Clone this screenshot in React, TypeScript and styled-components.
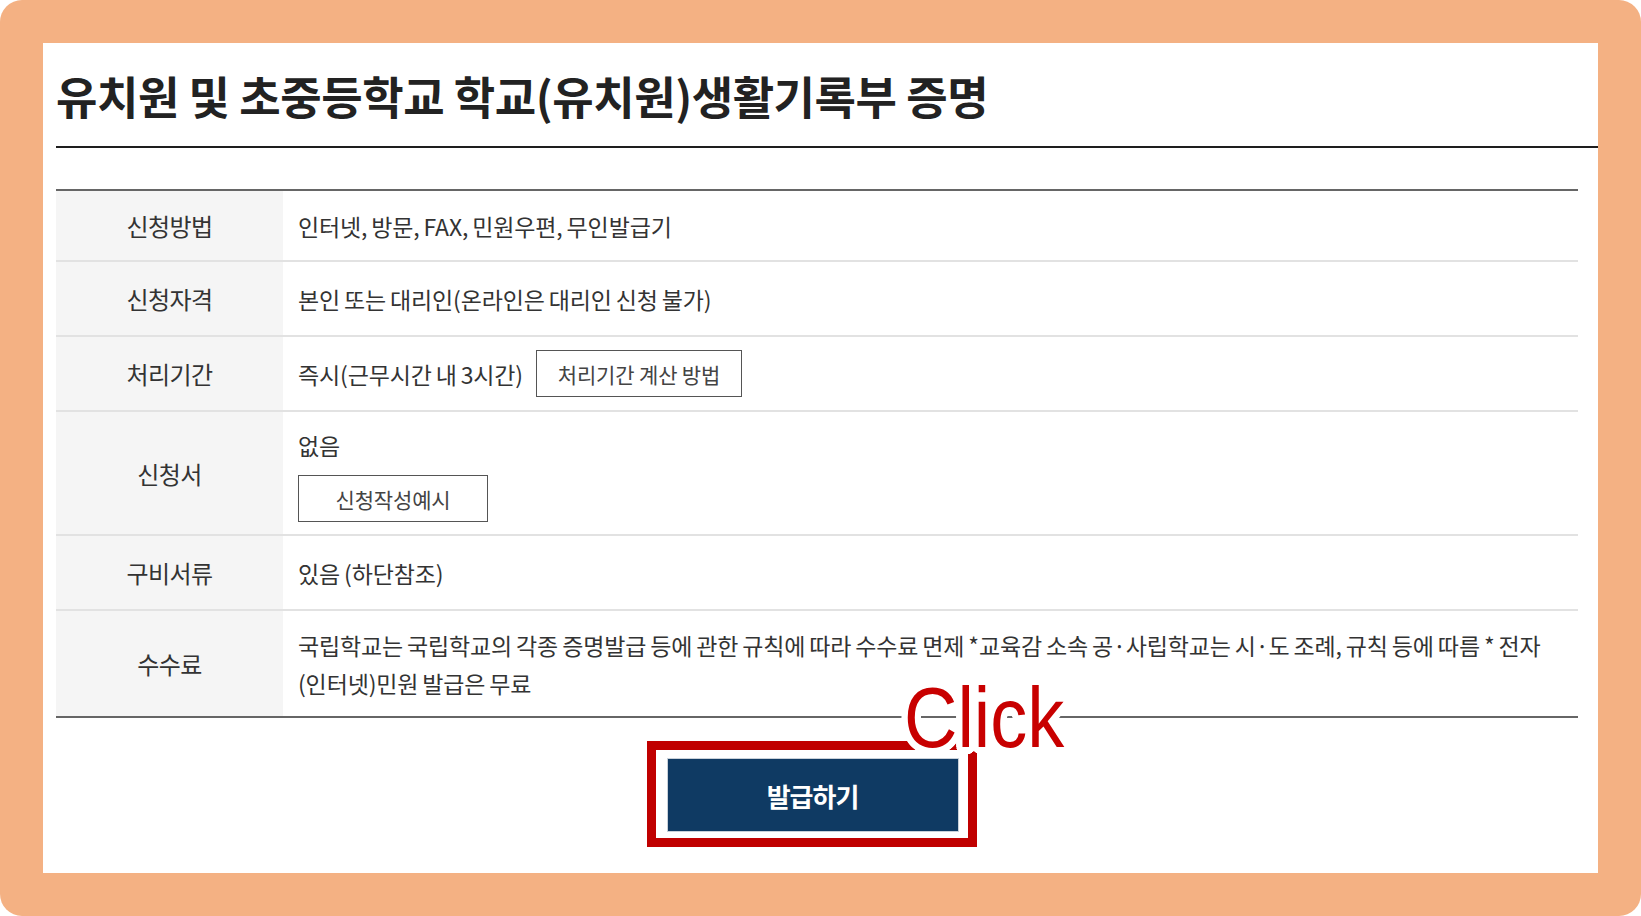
import styled, {createGlobalStyle} from "styled-components";

const GlobalStyle = createGlobalStyle`
    html, body {
        margin: 0;
        padding: 0;
        background: #fff;
    }

    body {
        font-family: "Noto Sans CJK KR", "Noto Sans", sans-serif;
        color: #333;
    }
`;

// 흰색 글자 테두리 (Click 글자 주변)
const halo = Array.from({length: 24}, (_, i) => {
  const a = (i / 24) * Math.PI * 2;
  return `${(Math.cos(a) * 7).toFixed(1)}px ${(Math.sin(a) * 7).toFixed(1)}px 0 #fff`;
}).join(", ");

const Frame = styled.div`
    width: 1641px;
    height: 916px;
    box-sizing: border-box;
    padding: 43px;
    background-color: #f4b183;
    border-radius: 22px;
`;

const Panel = styled.div`
    height: 100%;
    box-sizing: border-box;
    padding-left: 13px;
    background-color: #fff;
    display: flex;
    flex-direction: column;
`;

const Title = styled.h2`
    margin: 0;
    padding: 26px 0 24px;
    font-size: 45px;
    line-height: 53px;
    font-weight: 700;
    letter-spacing: -0.45px;
    color: #222;
    border-bottom: 2px solid #1e1e1e;
`;

const Table = styled.div`
    margin: 41px 20px 0 0;
    border-top: 2px solid #666;
`;

const Row = styled.div<{ $h: number; $last?: boolean }>`
    display: grid;
    grid-template-columns: 227px 1fr;
    height: ${props => props.$h}px;
    border-bottom: 2px solid ${props => props.$last ? "#666" : "#e2e2e2"};
`;

const Label = styled.div`
    display: flex;
    align-items: center;
    justify-content: center;
    background-color: #f5f5f5;
    font-size: 24px;
    letter-spacing: -0.6px;
    color: #333;
`;

const Value = styled.div<{ $stack?: boolean }>`
    display: flex;
    flex-direction: ${props => props.$stack ? "column" : "row"};
    align-items: ${props => props.$stack ? "flex-start" : "center"};
    gap: ${props => props.$stack ? 15 : 13}px;
    padding: ${props => props.$stack ? "18px 15px 0" : "0 15px"};
    font-size: 23px;
    line-height: 30px;
    letter-spacing: -0.15px;
    word-spacing: -1px;
    color: #333;
`;

const FeeText = styled.p`
    margin: 0;
    line-height: 38px;
    word-break: keep-all;
`;

const NoWrap = styled.span`
    white-space: nowrap;
`;

const OutlineButton = styled.button<{ $w: number }>`
    width: ${props => props.$w}px;
    height: 47px;
    box-sizing: border-box;
    padding: 0;
    border: 1px solid #555;
    background: #fff;
    font-family: inherit;
    font-size: 21px;
    letter-spacing: -0.15px;
    color: #444;
    flex-shrink: 0;
`;

const ButtonArea = styled.div`
    display: flex;
    justify-content: center;
    padding: 23px 31px 0 0;
`;

const RedFrame = styled.div`
    position: relative;
    border: 9px solid #c00000;
    padding: 9px 10px 7px 12px;
`;

const IssueButton = styled.button`
    display: block;
    width: 290px;
    height: 72px;
    border: none;
    box-shadow: 0 0 0 1px #c9d1d9;
    background-color: #0f3a63;
    color: #fff;
    font-family: inherit;
    font-size: 26px;
    font-weight: 700;
    letter-spacing: -1px;
`;

const ClickMark = styled.span`
    position: absolute;
    left: 248px;
    top: -75px;
    font-family: "Liberation Sans", Arial, sans-serif;
    font-size: 85px;
    line-height: 85px;
    color: #c80000;
    white-space: nowrap;
    transform: scaleX(0.87);
    transform-origin: left center;
    text-shadow: ${halo};
`;

export default function App() {
  return (
    <>
      <GlobalStyle />
      <Frame>
        <Panel>
          <Title>유치원 및 초중등학교 학교(유치원)생활기록부 증명</Title>
          <Table>
            <Row $h={69}>
              <Label>신청방법</Label>
              <Value>인터넷, 방문, FAX, 민원우편, 무인발급기</Value>
            </Row>
            <Row $h={73}>
              <Label>신청자격</Label>
              <Value>본인 또는 대리인(온라인은 대리인 신청 불가)</Value>
            </Row>
            <Row $h={73}>
              <Label>처리기간</Label>
              <Value>
                즉시(근무시간 내 3시간)
                <OutlineButton $w={206}>처리기간 계산 방법</OutlineButton>
              </Value>
            </Row>
            <Row $h={122}>
              <Label>신청서</Label>
              <Value $stack>
                없음
                <OutlineButton $w={190}>신청작성예시</OutlineButton>
              </Value>
            </Row>
            <Row $h={73}>
              <Label>구비서류</Label>
              <Value>있음 (하단참조)</Value>
            </Row>
            <Row $h={105} $last>
              <Label>수수료</Label>
              <Value>
                <FeeText>
                  국립학교는 국립학교의 각종 증명발급 등에 관한 규칙에 따라 수수료 면제 *교육감 소속 공·사립학교는 시·도 조례, 규칙 등에 따름 * 전자 <NoWrap>(인터넷)민원</NoWrap> 발급은 무료
                </FeeText>
              </Value>
            </Row>
          </Table>
          <ButtonArea>
            <RedFrame>
              <IssueButton>발급하기</IssueButton>
              <ClickMark>Click</ClickMark>
            </RedFrame>
          </ButtonArea>
        </Panel>
      </Frame>
    </>
  );
}
